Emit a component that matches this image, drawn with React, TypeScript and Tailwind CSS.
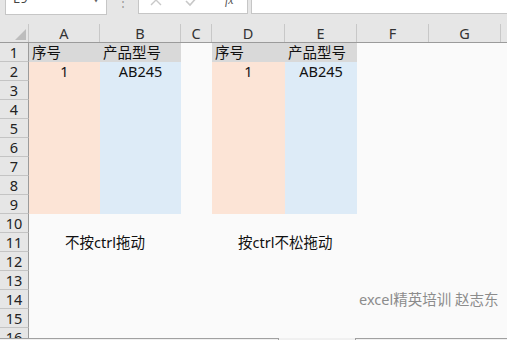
import React from 'react';

const cols = [
   { key: 'A', w: 71 },
   { key: 'B', w: 81 },
   { key: 'C', w: 31 },
   { key: 'D', w: 73 },
   { key: 'E', w: 72 },
   { key: 'F', w: 72 },
   { key: 'G', w: 72 },
   { key: 'H', w: 72 },
];

const fills: Record<string, string> = {
   A: 'bg-[#fce4d6]',
   B: 'bg-[#ddebf7]',
   D: 'bg-[#fce4d6]',
   E: 'bg-[#ddebf7]',
};

const Cell: React.FC<{ w: number; className?: string; children?: React.ReactNode }> = ({ w, className = '', children }) => (
   <div className={`h-full shrink-0 flex items-center whitespace-nowrap ${className}`} style={{ width: w }}>
      {children}
   </div>
);

const Row: React.FC<{ n: number }> = ({ n }) => {
   const cells = cols.map(c => {
      let cls = '';
      let content: React.ReactNode = null;
      if (n === 1 && fills[c.key]) cls = 'bg-[#d9d9d9]';
      else if (n >= 2 && n <= 9 && fills[c.key]) cls = fills[c.key];

      if (n === 1 && (c.key === 'A' || c.key === 'D')) content = <span className="pl-[3px]">序号</span>;
      if (n === 1 && (c.key === 'B' || c.key === 'E')) content = <span className="pl-[3px]">产品型号</span>;
      if (n === 2 && (c.key === 'A' || c.key === 'D')) { cls += ' justify-center'; content = '1'; }
      if (n === 2 && (c.key === 'B' || c.key === 'E')) { cls += ' justify-center'; content = 'AB245'; }
      if (n === 11 && c.key === 'A') content = <span className="pl-[36px]">不按ctrl拖动</span>;
      if (n === 11 && c.key === 'D') content = <span className="pl-[26px]">按ctrl不松拖动</span>;
      if (n === 14 && c.key === 'F') content = <span className="pl-[2px] text-[#8c8c8c]">excel精英培训 赵志东</span>;
      return <Cell key={c.key} w={c.w} className={cls}>{content}</Cell>;
   });

   return (
      <div className="flex h-[19px] shrink-0">
         <div className="w-[29px] shrink-0 h-full bg-[#e6e6e6] border-r border-r-[#9b9b9b] border-b border-b-[#c4c4c4] flex items-center justify-center text-[#222]">
            {n}
         </div>
         {cells}
      </div>
   );
};

const App: React.FC = () => {
   const rows = Array.from({ length: 16 }, (_, i) => i + 1);

   return (
      <div
         className="w-[507px] h-[340px] overflow-hidden bg-[#fafafa] text-[14.5px] leading-none text-[#111] flex flex-col"
         style={{ fontFamily: '"Noto Sans", "Noto Sans CJK SC", sans-serif' }}
      >
         {/* formula bar */}
         <div className="h-[24px] shrink-0 bg-[#e6e6e6] flex items-start overflow-hidden">
            <div className="ml-[5px] w-[102px] h-[16px] -mt-[1px] bg-white border border-[#c6c6c6] relative">
               <span className="absolute left-[7px] -top-[8px] text-[13px] text-[#444]">E9</span>
               <span className="absolute right-[6px] -top-[5px] text-[8px] text-[#666]">▼</span>
            </div>
            <div className="w-[31px] flex justify-center -mt-[4px] text-[12px] text-[#999]">⋮</div>
            <div className="w-[110px] h-[15px] -mt-[1px] bg-white border border-[#c6c6c6] relative overflow-hidden">
               <svg className="absolute left-[11px] -top-[6px]" width="12" height="12" viewBox="0 0 12 12">
                  <path d="M1 11 L6 6 L11 11" fill="none" stroke="#c8c8c8" strokeWidth="1.4" />
               </svg>
               <svg className="absolute left-[46px] -top-[5px]" width="14" height="12" viewBox="0 0 14 12">
                  <path d="M1 6 L5 10 L13 1" fill="none" stroke="#c8c8c8" strokeWidth="1.6" />
               </svg>
               <span
                  className="absolute left-[86px] -top-[6px] text-[12px] italic text-[#555]"
                  style={{ fontFamily: '"Liberation Serif", serif' }}
               >
                  fx
               </span>
            </div>
            <div className="ml-[3px] flex-1 h-[15px] -mt-[1px] bg-white border border-[#c6c6c6] border-r-0" />
         </div>

         {/* column headers */}
         <div className="flex h-[19px] shrink-0 bg-[#e6e6e6] border-b border-[#9b9b9b] text-[#333]">
            <div className="w-[29px] shrink-0 h-full border-r border-[#c8c8c8] relative">
               <svg className="absolute right-[2px] bottom-[2px]" width="11" height="11" viewBox="0 0 11 11">
                  <path d="M11 0 L11 11 L0 11 Z" fill="#bdbdbd" />
               </svg>
            </div>
            {cols.map(c => (
               <div
                  key={c.key}
                  className="shrink-0 h-full flex items-center justify-center border-r border-[#c8c8c8]"
                  style={{ width: c.w }}
               >
                  {c.key}
               </div>
            ))}
         </div>

         {/* sheet */}
         <div className="flex-1 flex flex-col overflow-hidden">
            {rows.map(n => <Row key={n} n={n} />)}
         </div>

         {/* bottom edge */}
         <div className="h-[2px] shrink-0 flex bg-[#f0f0f0]">
            <div className="w-[279px] border-t border-r border-[#a0a0a0]" />
            <div className="w-[76px]" />
            <div className="flex-1 border-t border-l border-[#a0a0a0]" />
         </div>
      </div>
   );
};

export default App;
